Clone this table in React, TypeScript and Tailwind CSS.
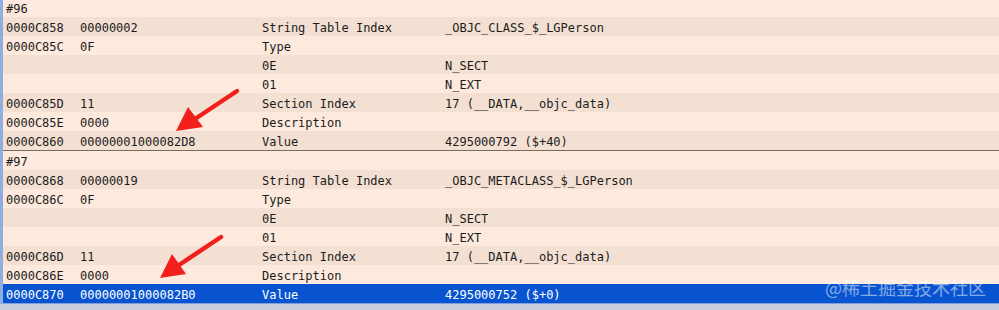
import React from "react";

type Row = [string, string, string, string];

const block96: Row[] = [
  ["#96", "", "", ""],
  ["0000C858", "00000002", "String Table Index", "_OBJC_CLASS_$_LGPerson"],
  ["0000C85C", "0F", "Type", ""],
  ["", "", "0E", "N_SECT"],
  ["", "", "01", "N_EXT"],
  ["0000C85D", "11", "Section Index", "17 (__DATA,__objc_data)"],
  ["0000C85E", "0000", "Description", ""],
  ["0000C860", "00000001000082D8", "Value", "4295000792 ($+40)"],
];

const block97: Row[] = [
  ["#97", "", "", ""],
  ["0000C868", "00000019", "String Table Index", "_OBJC_METACLASS_$_LGPerson"],
  ["0000C86C", "0F", "Type", ""],
  ["", "", "0E", "N_SECT"],
  ["", "", "01", "N_EXT"],
  ["0000C86D", "11", "Section Index", "17 (__DATA,__objc_data)"],
  ["0000C86E", "0000", "Description", ""],
  ["0000C870", "00000001000082B0", "Value", "4295000752 ($+0)"],
];

function TableRow({ row, index, selected, first }: { row: Row; index: number; selected?: boolean; first?: boolean }) {
  const bg = selected ? "bg-[#0854d0] text-white" : index % 2 === 0 ? "bg-[#fde9dd] text-[#1c1c1c]" : "bg-[#f3e0d3] text-[#1c1c1c]";
  return (
    <div className={`grid grid-cols-[74px_182px_183px_1fr] pl-[3px] items-center ${first ? "h-[17px] pt-[1px]" : "h-[19px] pt-[3px]"} ${bg}`}>
      <span>{row[0]}</span>
      <span>{row[1]}</span>
      <span>{row[2]}</span>
      <span>{row[3]}</span>
    </div>
  );
}

export default function App() {
  return (
    <div className="relative w-[999px] h-[310px] overflow-hidden bg-[#c7cdda] font-['DejaVu_Sans_Mono',monospace] text-[12px] leading-[14px]">
      <div className="border-l-[3px] border-[#8eaee0] flex flex-col">
        {block96.map((r, i) => (
          <TableRow key={i} row={r} index={i} first={i === 0} />
        ))}
        <div className="h-px bg-[#7b6a5f]" />
        {block97.map((r, i) => (
          <TableRow key={i} row={r} index={i} selected={i === 7} />
        ))}
        <div className="h-px bg-[#7f9fdc]" />
      </div>

      {/* annotation arrows */}
      <svg className="absolute inset-0 pointer-events-none" width="999" height="310">
        <line x1="237" y1="91" x2="192" y2="121" stroke="#f2201b" strokeWidth="4.5" strokeLinecap="round" />
        <polygon points="176,131 188,107 203,127" fill="#f2201b" />
        <line x1="221" y1="237" x2="176" y2="267" stroke="#f2201b" strokeWidth="4.5" strokeLinecap="round" />
        <polygon points="160,278 172,254 186,274" fill="#f2201b" />
      </svg>

      <div className="absolute left-[825px] top-[276px] text-[18px] leading-[22px] text-white/50 font-['Noto_Sans_CJK_SC',sans-serif]">
        @稀土掘金技术社区
      </div>
    </div>
  );
}
